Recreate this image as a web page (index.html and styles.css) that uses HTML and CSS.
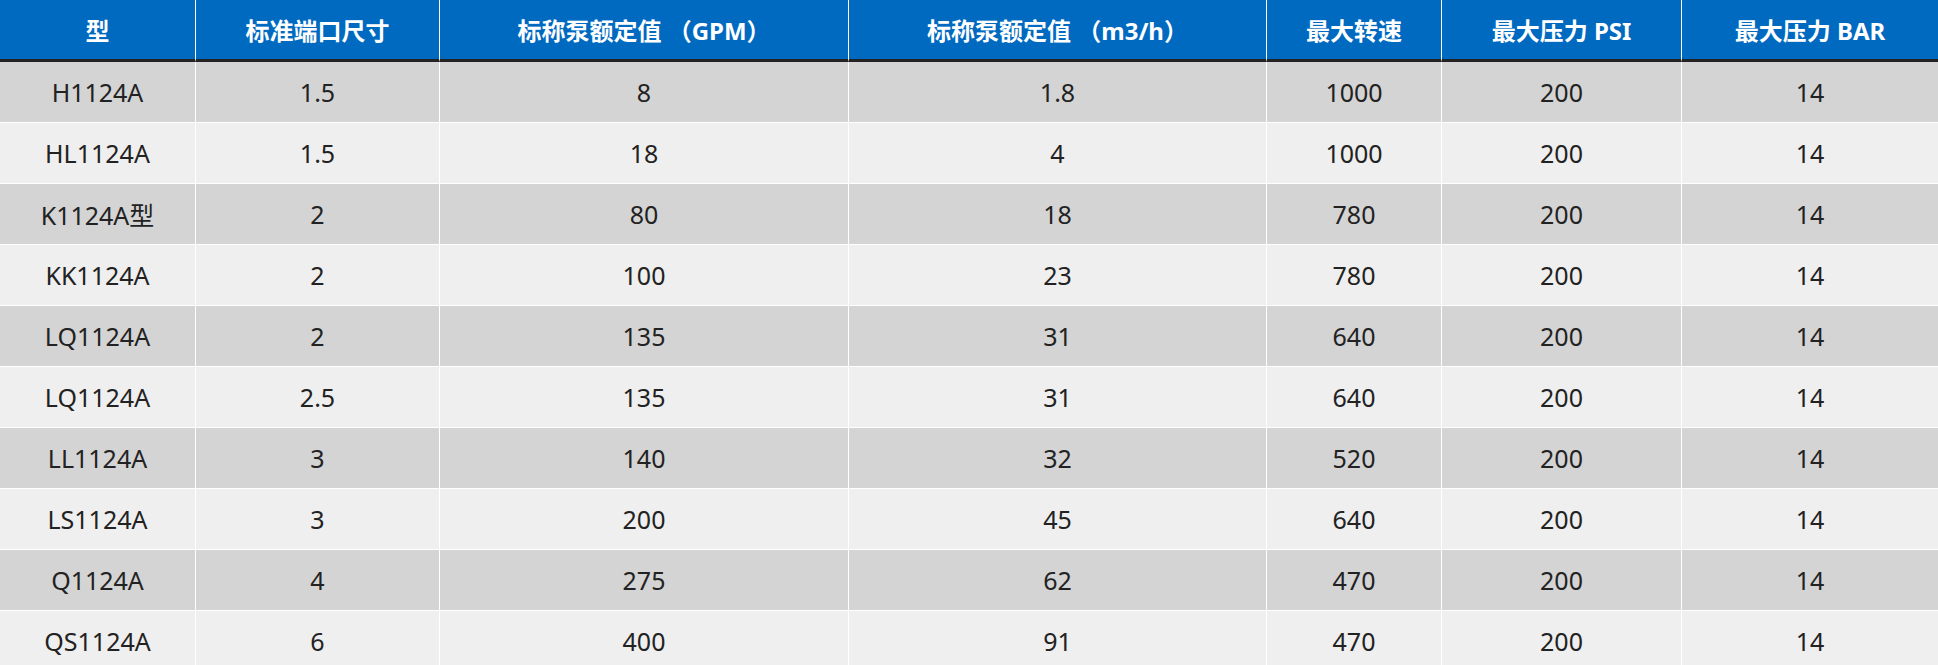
FILE: index.html
```html
<!DOCTYPE html>
<html lang="zh-CN">
<head>
<meta charset="utf-8">
<title>泵参数表</title>
<link rel="stylesheet" href="styles.css">
</head>
<body>
<table class="spec">
  <thead>
    <tr>
      <th class="c0">型</th>
      <th class="c1">标准端口尺寸</th>
      <th class="c2">标称泵额定值 （GPM）</th>
      <th class="c3">标称泵额定值 （m3/h）</th>
      <th class="c4">最大转速</th>
      <th class="c5">最大压力 PSI</th>
      <th class="c6">最大压力 BAR</th>
    </tr>
  </thead>
  <tbody>
    <tr><td>H1124A</td><td>1.5</td><td>8</td><td>1.8</td><td>1000</td><td>200</td><td>14</td></tr>
    <tr><td>HL1124A</td><td>1.5</td><td>18</td><td>4</td><td>1000</td><td>200</td><td>14</td></tr>
    <tr><td>K1124A型</td><td>2</td><td>80</td><td>18</td><td>780</td><td>200</td><td>14</td></tr>
    <tr><td>KK1124A</td><td>2</td><td>100</td><td>23</td><td>780</td><td>200</td><td>14</td></tr>
    <tr><td>LQ1124A</td><td>2</td><td>135</td><td>31</td><td>640</td><td>200</td><td>14</td></tr>
    <tr><td>LQ1124A</td><td>2.5</td><td>135</td><td>31</td><td>640</td><td>200</td><td>14</td></tr>
    <tr><td>LL1124A</td><td>3</td><td>140</td><td>32</td><td>520</td><td>200</td><td>14</td></tr>
    <tr><td>LS1124A</td><td>3</td><td>200</td><td>45</td><td>640</td><td>200</td><td>14</td></tr>
    <tr><td>Q1124A</td><td>4</td><td>275</td><td>62</td><td>470</td><td>200</td><td>14</td></tr>
    <tr><td>QS1124A</td><td>6</td><td>400</td><td>91</td><td>470</td><td>200</td><td>14</td></tr>
  </tbody>
</table>
</body>
</html>
```

FILE: styles.css
```css
html, body {
  margin: 0;
  padding: 0;
  background: #ffffff;
}

.spec {
  width: 1938px;
  table-layout: fixed;
  border-collapse: separate;
  border-spacing: 0;
  font-family: "Noto Sans", "Noto Sans CJK SC", sans-serif;
  color: #222222;
}

.spec th,
.spec td {
  box-sizing: border-box;
  padding: 0;
  text-align: center;
  vertical-align: middle;
  white-space: nowrap;
}

.spec th + th,
.spec td + td {
  border-left: 1px solid #ffffff;
}

.spec th {
  height: 62px;
  background: #0069c0;
  color: #ffffff;
  font-size: 24px;
  font-weight: 700;
  border-bottom: 3px solid #232323;
}

.spec td {
  height: 61px;
  font-size: 25px;
  font-weight: 400;
  border-bottom: 1px solid #ffffff;
}

.spec tbody tr:nth-child(odd) td {
  background: #d4d4d4;
}

.spec tbody tr:nth-child(even) td {
  background: #efefef;
}

.c0 { width: 195px; }
.c1 { width: 244px; }
.c2 { width: 409px; }
.c3 { width: 418px; }
.c4 { width: 175px; }
.c5 { width: 240px; }
.c6 { width: 257px; }
```
